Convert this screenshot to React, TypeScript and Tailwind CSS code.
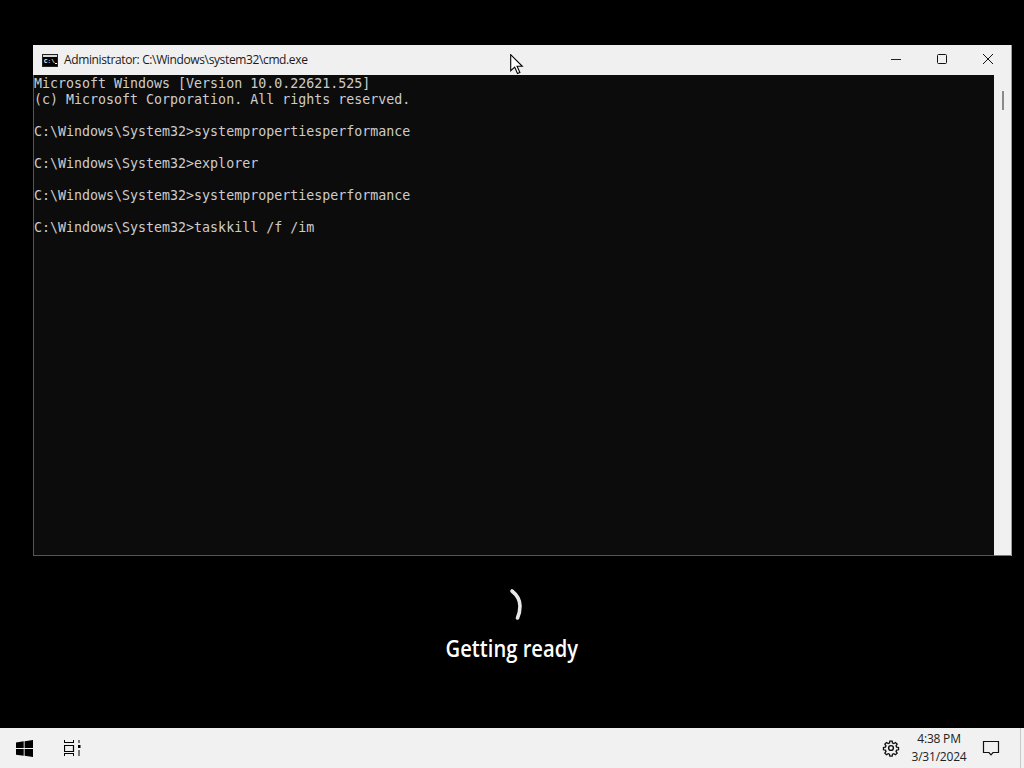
const consoleLines = [
  'Microsoft Windows [Version 10.0.22621.525]',
  '(c) Microsoft Corporation. All rights reserved.',
  '',
  'C:\\Windows\\System32>systempropertiesperformance',
  '',
  'C:\\Windows\\System32>explorer',
  '',
  'C:\\Windows\\System32>systempropertiesperformance',
  '',
  'C:\\Windows\\System32>taskkill /f /im',
];

const CmdIcon = () => (
  <div className="flex h-[13px] w-[16px] flex-col bg-[#222] p-px">
    <div className="h-[2px] bg-[#d8d8d8]" />
    <div className="flex flex-1 items-end bg-black pb-px pl-px font-['Liberation_Mono',monospace] text-[6px] font-bold leading-[7px] text-white">
      <span>C:\</span>
      <div className="mb-px h-px w-[2px] bg-white" />
    </div>
  </div>
);

const CmdWindow = () => (
  <div className="relative ml-[33px] h-[511px] w-[979px] border-r border-[#9a9a9a] bg-[#f0f0f0]">
    <div className="flex h-[30px] items-center">
      <div className="ml-[9px] mr-[6px]">
        <CmdIcon />
      </div>
      <span className="font-['Open_Sans',sans-serif] text-[12px] tracking-[-0.37px] text-[#1a1a1a]">
        Administrator: C:\Windows\system32\cmd.exe
      </span>
      <div className="ml-auto flex items-center">
        <svg width="46" height="30" viewBox="0 0 46 30">
          <path d="M18 14.5h10" stroke="#222" strokeWidth="1" />
        </svg>
        <svg width="46" height="30" viewBox="0 0 46 30">
          <rect x="18.5" y="9.5" width="9" height="9" rx="1" fill="none" stroke="#111" strokeWidth="1" />
        </svg>
        <svg width="46" height="30" viewBox="0 0 46 30">
          <path d="M18 9l10 10M28 9L18 19" stroke="#111" strokeWidth="1" />
        </svg>
      </div>
    </div>
    <div className="flex h-[481px]">
      <div className="h-full w-[961px] border-b border-l border-[#555] bg-[#0c0c0c] pt-px font-['DejaVu_Sans_Mono',monospace] text-[13.3px] leading-[16px] text-[#cccccc]">
        {consoleLines.map((line, i) => (
          <div key={i} className="h-[16px] whitespace-pre">
            {line}
          </div>
        ))}
      </div>
      <div className="flex flex-1 justify-center border-b border-[#777] pt-[16px]">
        <div className="h-[19px] w-[2px] bg-[#8a8a8a]" />
      </div>
    </div>
  </div>
);

const Spinner = () => (
  <svg width="16" height="34" viewBox="0 0 16 34" className="ml-[10px]">
    <path d="M3 3C8 7 11 12 11 18c0 4-.7 8-2.5 12" fill="none" stroke="#e8e8e8" strokeWidth="3.6" strokeLinecap="round" />
  </svg>
);

const Taskbar = () => (
  <div className="mt-auto flex h-[40px] items-center bg-[#f1f1f1]">
    <svg width="17" height="17" viewBox="0 0 17 17" className="ml-[16px]">
      <path d="M0 2.4 7.7 1.3v6.8H0zM8.6 1.2 17 0v8.1H8.6zM0 9h7.7v6.8L0 14.7zM8.6 9H17v8l-8.4-1.2z" fill="#000" />
    </svg>
    <svg width="17" height="18" viewBox="0 0 17 18" className="ml-[31px]">
      <path d="M.5 1v3M9.5 1v3M.5 3.5h9M.5 14.5h9M.5 14v3M9.5 14v3" fill="none" stroke="#000" strokeWidth="1" />
      <path d="M.5 6.5h9v6h-9z" fill="none" stroke="#000" strokeWidth="1.2" />
      <path d="M14 6h2.5v3H14z" fill="#000" />
      <path d="M15 1v3M15 11v6" stroke="#000" strokeWidth="1" />
    </svg>
    <svg width="18" height="18" viewBox="0 0 24 24" fill="none" stroke="#111" strokeWidth="1.9" className="ml-auto">
      <circle cx="12" cy="12" r="3.2" />
      <path d="M10.3 2.5h3.4l.5 2.8 1.9.8 2.4-1.6 2.4 2.4-1.6 2.4.8 1.9 2.8.5v3.4l-2.8.5-.8 1.9 1.6 2.4-2.4 2.4-2.4-1.6-1.9.8-.5 2.8h-3.4l-.5-2.8-1.9-.8-2.4 1.6-2.4-2.4 1.6-2.4-.8-1.9-2.8-.5v-3.4l2.8-.5.8-1.9-1.6-2.4 2.4-2.4 2.4 1.6 1.9-.8z" transform="translate(12 12) scale(.92) translate(-12 -12.5)" />
    </svg>
    <div className="ml-[7px] flex w-[64px] flex-col items-center font-['Open_Sans',sans-serif] text-[12px] leading-[18px] tracking-[-0.2px] text-[#222]">
      <span>4:38 PM</span>
      <span>3/31/2024</span>
    </div>
    <svg width="18" height="18" viewBox="0 0 18 18" className="ml-[11px] mr-[24px]">
      <path d="M1.5 2.5h15v11H11L9 15.8 7 13.5H1.5z" fill="none" stroke="#111" strokeWidth="1.2" />
    </svg>
    <div className="absolute right-[3px] h-[40px] w-px bg-[#c8c8c8]" />
  </div>
);

export default function App() {
  return (
    <div className="relative flex h-[768px] w-[1024px] flex-col overflow-hidden bg-black pt-[45px]">
      <CmdWindow />
      <div className="mt-[32px] flex flex-col items-center">
        <Spinner />
        <span className="mt-[9px] scale-x-[0.84] font-['Open_Sans',sans-serif] text-[24px] font-semibold leading-[34px] text-white">
          Getting ready
        </span>
      </div>
      <Taskbar />
      <svg width="14" height="21" viewBox="0 0 14 21" className="absolute left-[510px] top-[54px]">
        <path d="M.7.7v16l4-3.6 2.8 6.4 2.4-1-2.8-6.2h5.2z" fill="#fff" stroke="#000" strokeWidth="1.1" />
      </svg>
    </div>
  );
}
